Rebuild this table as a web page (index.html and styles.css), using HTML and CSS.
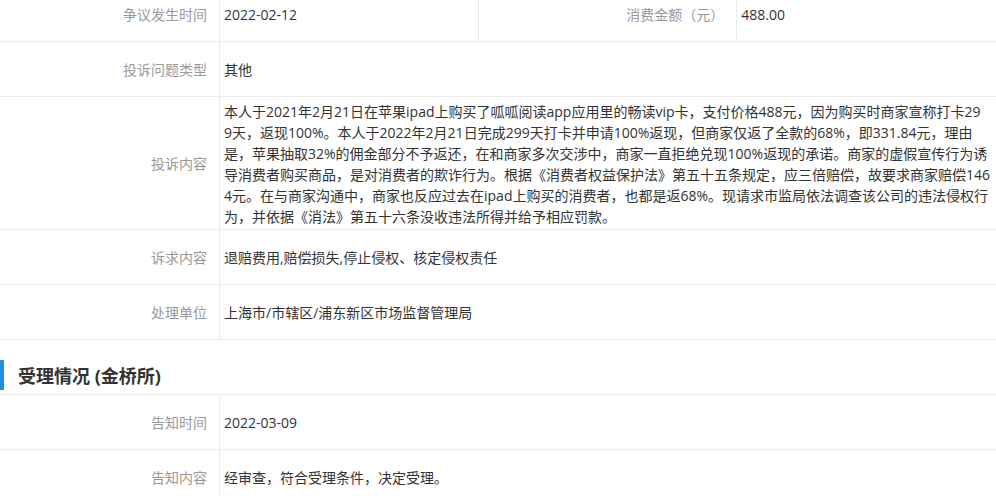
FILE: index.html
```html
<!DOCTYPE html>
<html lang="zh-CN">
<head>
    <meta charset="UTF-8">
    <title>投诉详情</title>
    <link rel="stylesheet" href="styles.css">
</head>
<body>
<div class="page">
    <!-- 投诉信息 -->
    <div class="row row-split">
        <div class="label">争议发生时间</div>
        <div class="value">2022-02-12</div>
        <div class="label">消费金额（元）</div>
        <div class="value">488.00</div>
    </div>
    <div class="row">
        <div class="label">投诉问题类型</div>
        <div class="value">其他</div>
    </div>
    <div class="row">
        <div class="label">投诉内容</div>
        <div class="value value-long">本人于2021年2月21日在苹果ipad上购买了呱呱阅读app应用里的畅读vip卡，支付价格488元，因为购买时商家宣称打卡29<br>9天，返现100%。本人于2022年2月21日完成299天打卡并申请100%返现，但商家仅返了全款的68%，即331.84元，理由<br>是，苹果抽取32%的佣金部分不予返还，在和商家多次交涉中，商家一直拒绝兑现100%返现的承诺。商家的虚假宣传行为诱<br>导消费者购买商品，是对消费者的欺诈行为。根据《消费者权益保护法》第五十五条规定，应三倍赔偿，故要求商家赔偿146<br>4元。在与商家沟通中，商家也反应过去在ipad上购买的消费者，也都是返68%。现请求市监局依法调查该公司的违法侵权行<br>为，并依据《消法》第五十六条没收违法所得并给予相应罚款。</div>
    </div>
    <div class="row">
        <div class="label">诉求内容</div>
        <div class="value">退赔费用,赔偿损失,停止侵权、核定侵权责任</div>
    </div>
    <div class="row">
        <div class="label">处理单位</div>
        <div class="value">上海市/市辖区/浦东新区市场监督管理局</div>
    </div>

    <!-- 受理情况 -->
    <h2 class="section-title">受理情况 (金桥所)</h2>
    <div class="row">
        <div class="label">告知时间</div>
        <div class="value">2022-03-09</div>
    </div>
    <div class="row">
        <div class="label">告知内容</div>
        <div class="value">经审查，符合受理条件，决定受理。</div>
    </div>
</div>
</body>
</html>
```

FILE: styles.css
```css
body {
    margin: 0;
    padding: 0;
    background-color: #fff;
    font-family: "Open Sans", "Noto Sans CJK SC", sans-serif;
    font-size: 14px;
    color: #333;
    overflow: hidden;
}

.page {
    margin-top: -13px;
}

.row {
    display: grid;
    grid-template-columns: 220px 1fr;
    min-height: 54px;
    border-bottom: 1px solid #ebebeb;
}

.row-split {
    grid-template-columns: 220px 1fr 1fr 1fr;
}

.label {
    display: flex;
    align-items: center;
    justify-content: flex-end;
    padding-right: 12px;
    color: #999;
    border-right: 1px solid #ebebeb;
}

.value {
    display: flex;
    align-items: center;
    padding-left: 4px;
}

.row-split .value:nth-child(2) {
    border-right: 1px solid #ebebeb;
}

.value-long {
    display: block;
    padding: 4px 0 2px 4px;
    line-height: 21px;
    white-space: nowrap;
}

.section-title {
    margin: 0;
    height: 55px;
    box-sizing: border-box;
    padding: 20px 0 0 18px;
    line-height: 32px;
    position: relative;
    font-size: 18px;
    font-weight: bold;
    color: #333;
    border-bottom: 1px solid #ebebeb;
}

.section-title::before {
    content: "";
    position: absolute;
    left: 0;
    top: 20px;
    width: 4px;
    height: 30px;
    background-color: #1e8fe1;
}
```
